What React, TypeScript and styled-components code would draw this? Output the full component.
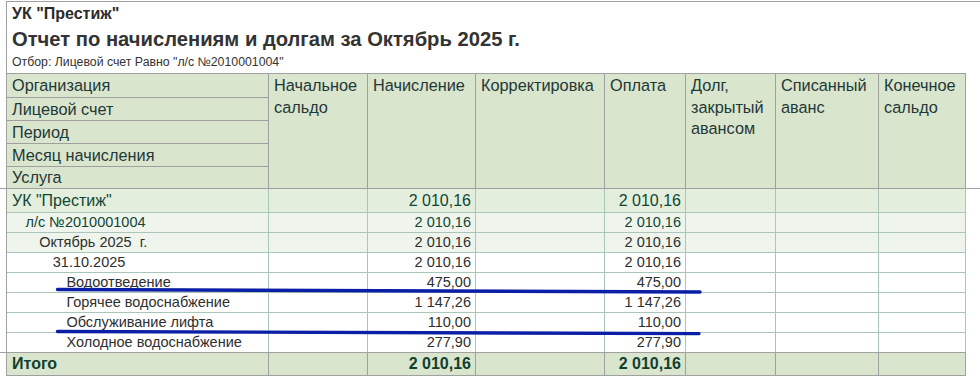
import React from 'react';
import styled, { createGlobalStyle } from 'styled-components';

const GlobalStyle = createGlobalStyle`
  *, *::before, *::after { box-sizing: border-box; }
  html, body { margin: 0; padding: 0; background: #ffffff; }
  body { font-family: "Liberation Sans", Arial, sans-serif; }
`;

const GRID = '262px 99px 108px 129px 81px 90px 103px 87px';
const FRAME = '#a0a0a0';
const LINE = '#aac6ba';
const HEAD_BG = '#d9e5cd';

const Page = styled.div`
  position: relative;
  width: 980px;
  height: 381px;
  overflow: hidden;
  background: #fff;
`;

const TitleBlock = styled.div`
  margin: 1px 0 0 6px;
  height: 72px;
  border-left: 1px solid ${FRAME};
  border-top: 1px solid ${FRAME};
  padding-left: 5px;
  display: flex;
  flex-direction: column;
  color: #2b2b2b;
`;

const Org = styled.div`
  font-size: 16px;
  font-weight: bold;
  line-height: 23px;
`;

const Heading = styled.div`
  font-size: 20.2px;
  font-weight: bold;
  line-height: 29px;
  color: #333;
`;

const Filter = styled.div`
  font-size: 12.3px;
  line-height: 17px;
  color: #333;
`;

const HeaderBand = styled.div`
  border-bottom: 1px solid ${FRAME};
`;

const HeaderGrid = styled.div`
  margin-left: 6px;
  width: 960px;
  display: grid;
  grid-template-columns: ${GRID};
  border-left: 1px solid ${FRAME};
  border-top: 1px solid ${FRAME};
  background: ${HEAD_BG};
  color: #1f3838;
  font-size: 16.3px;
`;

const HeaderStack = styled.div`
  display: flex;
  flex-direction: column;
  border-right: 1px solid ${FRAME};
`;

const SubCell = styled.div<{ $h: number; $last?: boolean }>`
  height: ${(p) => p.$h}px;
  line-height: ${(p) => (p.$last ? p.$h : p.$h - 1)}px;
  padding-left: 5px;
  border-bottom: ${(p) => (p.$last ? 'none' : `1px solid ${FRAME}`)};
  white-space: nowrap;
`;

const HeadCell = styled.div`
  border-right: 1px solid ${FRAME};
  padding: 1px 4px 0 5px;
  line-height: 21.5px;
`;

const BodyBand = styled.div`
  width: 966px;
  border-bottom: 1px solid ${FRAME};
`;

const BodyTable = styled.div`
  margin-left: 6px;
  width: 960px;
  border-left: 1px solid ${FRAME};
`;

const BodyRow = styled.div<{ $h: number; $bg: string; $size: number; $color: string }>`
  display: grid;
  grid-template-columns: ${GRID};
  height: ${(p) => p.$h}px;
  background: ${(p) => p.$bg};
  border-bottom: 1px solid ${LINE};
  font-size: ${(p) => p.$size}px;
  color: ${(p) => p.$color};
  line-height: ${(p) => p.$h - 1}px;

  &:last-child {
    border-bottom: none;
    line-height: ${(p) => p.$h}px;
  }
`;

const Cell = styled.div<{ $num?: boolean; $indent?: number }>`
  border-right: 1px solid ${LINE};
  padding-left: ${(p) => 5 + (p.$indent ?? 0) * 13.6}px;
  padding-right: 4px;
  text-align: ${(p) => (p.$num ? 'right' : 'left')};
  white-space: pre;
  overflow: hidden;
`;

const TotalRow = styled.div`
  margin-left: 6px;
  width: 960px;
  height: 23px;
  display: grid;
  grid-template-columns: ${GRID};
  border-left: 1px solid ${FRAME};
  border-bottom: 1px solid ${FRAME};
  background: ${HEAD_BG};
  color: #10402f;
  font-size: 16px;
  font-weight: bold;
  line-height: 22px;
`;

const TotalCell = styled.div<{ $num?: boolean }>`
  border-right: 1px solid ${FRAME};
  padding: 0 4px 0 5px;
  text-align: ${(p) => (p.$num ? 'right' : 'left')};
  white-space: pre;
`;

const Marks = styled.svg`
  position: absolute;
  left: 0;
  top: 0;
  pointer-events: none;
`;

type Row = {
  label: string;
  level: number;
  nach: string;
  opl: string;
};

const rows: Row[] = [
  { label: 'УК "Престиж"', level: 0, nach: '2 010,16', opl: '2 010,16' },
  { label: 'л/с №2010001004', level: 1, nach: '2 010,16', opl: '2 010,16' },
  { label: 'Октябрь 2025  г.', level: 2, nach: '2 010,16', opl: '2 010,16' },
  { label: '31.10.2025', level: 3, nach: '2 010,16', opl: '2 010,16' },
  { label: 'Водоотведение', level: 4, nach: '475,00', opl: '475,00' },
  { label: 'Горячее водоснабжение', level: 4, nach: '1 147,26', opl: '1 147,26' },
  { label: 'Обслуживание лифта', level: 4, nach: '110,00', opl: '110,00' },
  { label: 'Холодное водоснабжение', level: 4, nach: '277,90', opl: '277,90' },
];

const rowStyle = (i: number, count: number) => {
  const h = i === 0 ? 24 : i === count - 1 ? 19 : 20;
  const bg = i === 0 ? '#e4eedc' : i < 3 ? '#eff5ec' : '#ffffff';
  const size = i === 0 ? 16 : 14.5;
  const color = i < 2 ? '#0f4636' : '#2e2e2e';
  return { h, bg, size, color };
};

const headerStack = ['Организация', 'Лицевой счет', 'Период', 'Месяц начисления', 'Услуга'];
const stackHeights = [24, 23, 23, 23, 21];

const headerCols: string[][] = [
  ['Начальное', 'сальдо'],
  ['Начисление'],
  ['Корректировка'],
  ['Оплата'],
  ['Долг,', 'закрытый', 'авансом'],
  ['Списанный', 'аванс'],
  ['Конечное', 'сальдо'],
];

export default function App() {
  return (
    <Page>
      <GlobalStyle />
      <TitleBlock>
        <Org>УК "Престиж"</Org>
        <Heading>Отчет по начислениям и долгам за Октябрь 2025 г.</Heading>
        <Filter>Отбор: Лицевой счет Равно "л/с №2010001004"</Filter>
      </TitleBlock>

      <HeaderBand>
        <HeaderGrid>
          <HeaderStack>
            {headerStack.map((t, i) => (
              <SubCell key={t} $h={stackHeights[i]} $last={i === headerStack.length - 1}>
                {t}
              </SubCell>
            ))}
          </HeaderStack>
          {headerCols.map((lines, i) => (
            <HeadCell key={i}>
              {lines.map((l) => (
                <div key={l}>{l}</div>
              ))}
            </HeadCell>
          ))}
        </HeaderGrid>
      </HeaderBand>

      <BodyBand>
        <BodyTable>
          {rows.map((r, i) => {
            const s = rowStyle(i, rows.length);
            return (
              <BodyRow key={i} $h={s.h} $bg={s.bg} $size={s.size} $color={s.color}>
                <Cell $indent={r.level}>{r.label}</Cell>
                <Cell $num />
                <Cell $num>{r.nach}</Cell>
                <Cell $num />
                <Cell $num>{r.opl}</Cell>
                <Cell $num />
                <Cell $num />
                <Cell $num />
              </BodyRow>
            );
          })}
        </BodyTable>
      </BodyBand>

      <TotalRow>
        <TotalCell>Итого</TotalCell>
        <TotalCell $num />
        <TotalCell $num>2 010,16</TotalCell>
        <TotalCell $num />
        <TotalCell $num>2 010,16</TotalCell>
        <TotalCell $num />
        <TotalCell $num />
        <TotalCell $num />
      </TotalRow>

      <Marks width={980} height={381} viewBox="0 0 980 381">
        <path
          d="M57.5 289.5 C 200 290, 360 290.8, 700 292"
          stroke="#0a1fa6"
          strokeWidth={3.4}
          fill="none"
          strokeLinecap="round"
        />
        <path
          d="M57.5 331.5 C 200 333, 360 333.8, 699 333.6"
          stroke="#0a1fa6"
          strokeWidth={3.4}
          fill="none"
          strokeLinecap="round"
        />
      </Marks>
    </Page>
  );
}
